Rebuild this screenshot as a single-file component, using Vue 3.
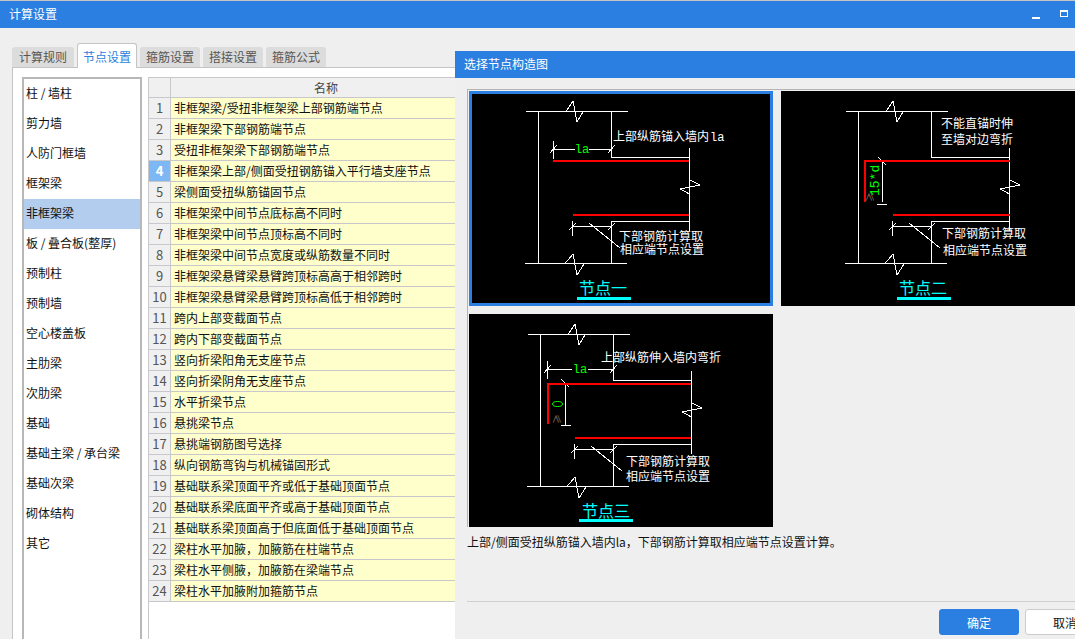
<script setup>
const tabs = ['计算规则', '节点设置', '箍筋设置', '搭接设置', '箍筋公式'];

const menu = ['柱 / 墙柱', '剪力墙', '人防门框墙', '框架梁', '非框架梁', '板 / 叠合板(整厚)', '预制柱', '预制墙', '空心楼盖板', '主肋梁', '次肋梁', '基础', '基础主梁 / 承台梁', '基础次梁', '砌体结构', '其它'];

const rows = [
    '非框架梁/受扭非框架梁上部钢筋端节点',
    '非框架梁下部钢筋端节点',
    '受扭非框架梁下部钢筋端节点',
    '非框架梁上部/侧面受扭钢筋锚入平行墙支座节点',
    '梁侧面受扭纵筋锚固节点',
    '非框架梁中间节点底标高不同时',
    '非框架梁中间节点顶标高不同时',
    '非框架梁中间节点宽度或纵筋数量不同时',
    '非框架梁悬臂梁悬臂跨顶标高高于相邻跨时',
    '非框架梁悬臂梁悬臂跨顶标高低于相邻跨时',
    '跨内上部变截面节点',
    '跨内下部变截面节点',
    '竖向折梁阳角无支座节点',
    '竖向折梁阴角无支座节点',
    '水平折梁节点',
    '悬挑梁节点',
    '悬挑端钢筋图号选择',
    '纵向钢筋弯钩与机械锚固形式',
    '基础联系梁顶面平齐或低于基础顶面节点',
    '基础联系梁底面平齐或高于基础顶面节点',
    '基础联系梁顶面高于但底面低于基础顶面节点',
    '梁柱水平加腋，加腋筋在柱端节点',
    '梁柱水平侧腋，加腋筋在梁端节点',
    '梁柱水平加腋附加箍筋节点'
];

// outline shared by the three node drawings
const frame = 'M57 20.5H159 M97 20.5L104 10L108 31L114 21 M69.5 20.5V172.5 M142.5 20.5V66.5H221 M220.5 57V140 M220.5 89L231 94L211 98L220.5 103 M142.5 172.5V130.5H221 M56 172.5H158 M96 172.5L104 163L108 184L115 173 M103.5 135.5H142 M103.5 130V145 M100 139L107 132 M139 139L146 132 M120 132L151 157';

const drawings = [
    {
        id: 1,
        dx: 0,
        selected: true,
        red: 'M84 70H220 M104 124H220',
        dim: 'M84.5 58.5H106 M120 58.5H142 M84.5 50V68 M81 62L88 54 M139 62L146 54',
        labels: [
            { x: 144, y: 50, text: '上部纵筋锚入墙内' },
            { x: 150, y: 150, text: '下部钢筋计算取' },
            { x: 151, y: 163, text: '相应端节点设置' }
        ],
        green: [{ x: 113, y: 62, text: 'la' }],
        latin: { x: 241, y: 50, text: 'la' },
        caption: { x: 134, text: '节点一' },
        bar: { x: 108, y: 206 }
    },
    {
        id: 2,
        dx: 8,
        selected: false,
        red: 'M84 111V70H229 M112 124H229',
        dim: 'M101.5 70V111 M97 66L105 74 M96 113.5H106',
        labels: [
            { x: 160, y: 37, text: '不能直锚时伸' },
            { x: 160, y: 53, text: '至墙对边弯折' },
            { x: 161, y: 147, text: '下部钢筋计算取' },
            { x: 162, y: 164, text: '相应端节点设置' }
        ],
        vertical: { x: 98, y: 105, text: '15*d' },
        ge: { x: 93, y: 111 },
        caption: { x: 142, text: '节点二' },
        bar: { x: 116, y: 206 }
    },
    {
        id: 3,
        dx: 2,
        selected: false,
        red: 'M79 110V70H222 M106 124H222',
        dim: 'M96.5 70V111 M78.5 55.5H103 M119 55.5H144 M78.5 47V65 M75 59L82 51 M141 59L148 51 M92 65L100 73 M92 111.5H102',
        labels: [
            { x: 132, y: 48, text: '上部纵筋伸入墙内弯折' },
            { x: 157, y: 152, text: '下部钢筋计算取' },
            { x: 157, y: 167, text: '相应端节点设置' }
        ],
        green: [{ x: 111, y: 59, text: 'la' }],
        zero: true,
        ge: { x: 92, y: 110 },
        caption: { x: 137, text: '节点三' },
        bar: { x: 110, y: 205 }
    }
];
</script>

<template>
    <div class="app">
        <div class="title-bar">
            <span>计算设置</span>
            <div class="win-btns">
                <i class="win-min"></i>
                <i class="win-max"></i>
            </div>
        </div>

        <div class="tabs">
            <div v-for="(t, i) in tabs" :key="t" class="tab" :class="{ active: i == 1, first: i == 0 }">{{ t }}</div>
        </div>

        <div class="panel">
            <ul class="menu">
                <li v-for="(m, i) in menu" :key="m" :class="{ selected: i == 4 }">{{ m }}</li>
            </ul>

            <div class="table">
                <div class="row head">
                    <div class="num"></div>
                    <div class="name">名称</div>
                </div>
                <div v-for="(r, i) in rows" :key="i" class="row">
                    <div class="num" :class="{ current: i == 3 }">{{ i + 1 }}</div>
                    <div class="name">{{ r }}</div>
                </div>
            </div>
        </div>

        <div class="dialog">
            <div class="dialog-title">选择节点构造图</div>
            <div class="dialog-body">
                <div class="pics">
                    <div v-for="d in drawings" :key="d.id" class="pic" :class="{ selected: d.selected }">
                        <svg width="304" height="215" viewBox="0 0 304 215">
                            <g fill="none" stroke-width="1" shape-rendering="crispEdges">
                                <path :d="frame" stroke="#fff" :transform="`translate(${d.dx} 0)`" />
                                <path :d="d.dim" stroke="#fff" />
                                <path :d="d.red" stroke="#f00" stroke-width="2" />
                                <rect :x="d.bar.x" :y="d.bar.y" width="54" height="3" fill="#0ff" />
                            </g>
                            <text v-for="l in d.labels" :key="l.text" :x="l.x" :y="l.y" class="label">{{ l.text }}</text>
                            <text v-if="d.latin" :x="d.latin.x" :y="d.latin.y" class="mono white">{{ d.latin.text }}</text>
                            <text v-for="g in d.green" :key="g.text" :x="g.x" :y="g.y" text-anchor="middle" class="mono green">{{ g.text }}</text>
                            <text v-if="d.vertical" :x="d.vertical.x" :y="d.vertical.y" :transform="`rotate(-90 ${d.vertical.x} ${d.vertical.y})`" class="mono green tall">{{ d.vertical.text }}</text>
                            <ellipse v-if="d.zero" cx="88.5" cy="90" rx="5" ry="2.5" fill="none" stroke="#0f0" />
                            <text v-if="d.ge" :x="d.ge.x" :y="d.ge.y" :transform="`rotate(-90 ${d.ge.x} ${d.ge.y})`" class="ge">≥</text>
                            <text :x="d.caption.x" y="203" text-anchor="middle" class="caption">{{ d.caption.text }}</text>
                        </svg>
                    </div>
                </div>
                <p class="desc">上部/侧面受扭纵筋锚入墙内la，下部钢筋计算取相应端节点设置计算。</p>
                <div class="footer">
                    <button class="btn primary">确定</button>
                    <button class="btn">取消</button>
                </div>
            </div>
        </div>
    </div>
</template>

<style>
html, body {
    margin: 0;
    overflow: hidden;
}
</style>

<style scoped>
.app {
    position: relative;
    width: 1075px;
    height: 639px;
    overflow: hidden;
    background: #efefef;
    border-top: 1px solid #c4c4c4;
    box-sizing: border-box;
    font-family: "Noto Sans CJK SC", "Noto Sans", sans-serif;
    font-size: 12px;
    color: #222;
}

.title-bar {
    display: flex;
    justify-content: space-between;
    align-items: center;
    box-sizing: border-box;
    height: 27px;
    padding: 0 7px 2px 9px;
    background: #2b7fe0;
    color: #fff;
}

.win-btns {
    display: flex;
    align-items: center;
    gap: 20px;
}

.win-min {
    display: block;
    width: 8px;
    height: 2px;
    margin-top: 8px;
    background: #fff;
}

.win-max {
    display: block;
    width: 8px;
    height: 7px;
    border: 1px solid #fff;
    border-top-width: 2px;
    box-sizing: border-box;
}

.tabs {
    display: flex;
    align-items: flex-end;
    gap: 3px;
    height: 39px;
    padding-left: 12px;
}

.tab {
    display: flex;
    align-items: center;
    justify-content: center;
    box-sizing: border-box;
    width: 60px;
    height: 20px;
    padding-bottom: 2px;
    border-radius: 3px 3px 0 0;
    background: #dcdcdc;
    color: #555;
}

.tab.first {
    width: 62px;
}

.tab.active {
    position: relative;
    height: 25px;
    margin-bottom: -1px;
    padding-bottom: 0;
    border: 1px solid #c4c4c4;
    border-bottom: none;
    background: #fff;
    color: #2b7fe0;
}

.panel {
    display: flex;
    gap: 6px;
    height: 580px;
    margin-left: 12px;
    padding: 9px 0 0 9px;
    border-top: 1px solid #c4c4c4;
    border-left: 1px solid #c4c4c4;
    background: #fff;
}

.menu {
    flex: none;
    width: 120px;
    height: 600px;
    margin: 0;
    padding: 0;
    box-sizing: border-box;
    border: 2px solid #b8b8b8;
    background: #fff;
    list-style: none;
}

.menu li {
    height: 30px;
    padding-left: 2px;
    line-height: 27px;
    white-space: nowrap;
    color: #111;
}

.menu li.selected {
    background: #b3cdee;
}

.table {
    flex: none;
    width: 332px;
    height: 600px;
    border-top: 1px solid #c8c8cc;
    border-left: 1px solid #c8c8cc;
}

.row {
    display: grid;
    grid-template-columns: 22px 1fr;
    height: 21px;
    box-sizing: border-box;
    border-bottom: 1px solid #c8c8cc;
    line-height: 20px;
}

.row.head {
    height: 20px;
    line-height: 19px;
}

.num {
    border-right: 1px solid #c8c8cc;
    background: #f0f0f0;
    text-align: center;
    font-size: 13px;
    color: #555;
}

.num.current {
    background: #7db8f5;
    color: #fff;
    font-weight: 700;
}

.name {
    padding-left: 3px;
    background: #ffffcc;
    white-space: nowrap;
    color: #111;
}

.head .name {
    padding-left: 0;
    background: #f0f0f0;
    text-align: center;
    color: #444;
}

.dialog {
    position: absolute;
    top: 50px;
    left: 455px;
    width: 662px;
    height: 589px;
    background: #efefef;
}

.dialog-title {
    height: 27px;
    padding-left: 9px;
    background: #2b7fe0;
    color: #fff;
    line-height: 25px;
}

.dialog-body {
    padding: 11px 0 0 12px;
}

.pics {
    display: grid;
    grid-template-columns: 304px 304px;
    grid-auto-rows: 215px;
    gap: 8px;
    box-sizing: border-box;
    height: 438px;
    padding: 1px 0 0 1px;
    overflow: hidden;
    border-top: 1px solid #b4b4b4;
    border-left: 1px solid #b4b4b4;
}

.pic {
    background: #000;
}

.pic.selected {
    outline: 3px solid #2b7fe0;
    outline-offset: -3px;
}

.pic svg {
    display: block;
}

.label {
    font-size: 12px;
    fill: #fff;
}

.mono {
    font-family: "Liberation Mono", monospace;
    font-size: 12px;
}

.tall {
    font-size: 13px;
}

.white {
    fill: #fff;
}

.green {
    fill: #0f0;
}

.ge {
    font-size: 10px;
    fill: #8a7560;
}

.caption {
    font-size: 16px;
    fill: #0ff;
}

.desc {
    height: 18px;
    margin: 6px 0 0;
    line-height: 18px;
    color: #111;
}

.footer {
    display: flex;
    justify-content: flex-end;
    gap: 6px;
    margin-top: 50px;
    padding: 7px 12px 0 0;
    border-top: 1px solid #cfcfcf;
}

.btn {
    width: 80px;
    height: 26px;
    padding: 0;
    border: 1px solid #ccc;
    border-radius: 3px;
    background: #fff;
    font: inherit;
    color: #111;
}

.btn.primary {
    border-color: #2b7fe0;
    background: #2b7fe0;
    color: #fff;
}
</style>
